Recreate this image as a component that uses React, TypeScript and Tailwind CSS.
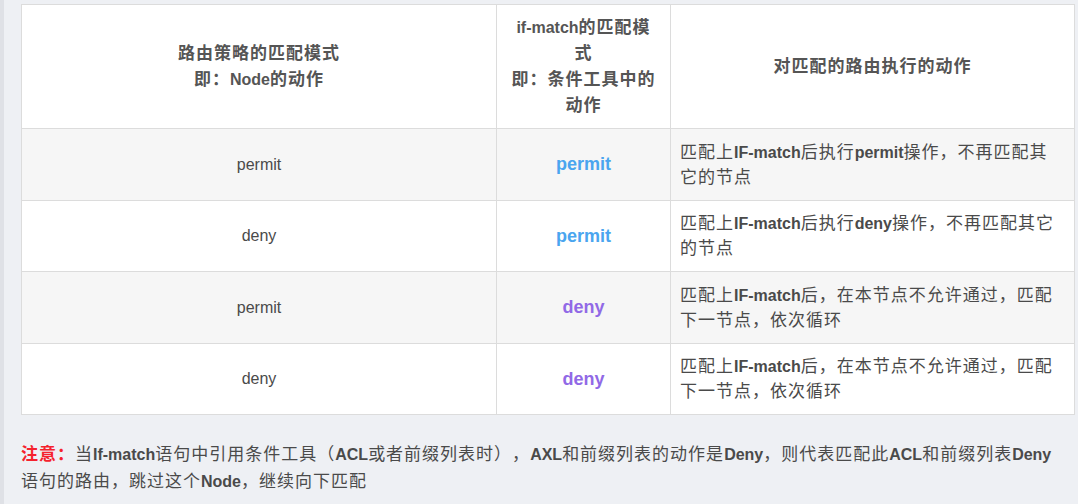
const font = { fontFamily: '"Liberation Sans", "Noto Sans CJK SC", sans-serif' };

function L({ children }: { children: React.ReactNode }) {
  return <span className="font-bold text-[16px] tracking-normal">{children}</span>;
}

const rows = [
  {
    node: 'permit',
    match: 'permit',
    color: 'text-[#4aa5ef]',
    bg: 'bg-[#f6f6f6]',
    h: 'h-[72px]',
    action: (
      <>
        匹配上<L>IF-match</L>后执行<L>permit</L>操作，不再匹配其它的节点
      </>
    ),
  },
  {
    node: 'deny',
    match: 'permit',
    color: 'text-[#4aa5ef]',
    bg: 'bg-white',
    h: 'h-[71px]',
    action: (
      <>
        匹配上<L>IF-match</L>后执行<L>deny</L>操作，不再匹配其它的节点
      </>
    ),
  },
  {
    node: 'permit',
    match: 'deny',
    color: 'text-[#9169e6]',
    bg: 'bg-[#f6f6f6]',
    h: 'h-[72px]',
    action: (
      <>
        匹配上<L>IF-match</L>后，在本节点不允许通过，匹配下一节点，依次循环
      </>
    ),
  },
  {
    node: 'deny',
    match: 'deny',
    color: 'text-[#9169e6]',
    bg: 'bg-white',
    h: 'h-[71px]',
    action: (
      <>
        匹配上<L>IF-match</L>后，在本节点不允许通过，匹配下一节点，依次循环
      </>
    ),
  },
];

export default function App() {
  return (
    <div className="flex w-[1078px] h-[504px] bg-[#eef0f4] overflow-hidden" style={font}>
      <div className="w-[4px] shrink-0 bg-[#dfe1e6]" />
      <div className="pl-[17px] pt-[4px]">
        <table className="table-fixed border-collapse w-[1053px] text-[17px] tracking-[1px] text-[#4a4a4a]">
          <colgroup>
            <col className="w-[475px]" />
            <col className="w-[174px]" />
            <col className="w-[404px]" />
          </colgroup>
          <thead>
            <tr className="h-[124px] bg-white">
              <th className="border border-[#dcdcdc] px-[10px] text-center font-bold leading-[26px] text-[#555]">
                路由策略的匹配模式
                <br />
                即：<L>Node</L>的动作
              </th>
              <th className="border border-[#dcdcdc] px-[11px] text-center font-bold leading-[26px] text-[#555]">
                <L>if-match</L>的匹配模式
                <br />
                即：条件工具中的动作
              </th>
              <th className="border border-[#dcdcdc] px-[10px] text-center font-bold leading-[26px] text-[#555]">
                对匹配的路由执行的动作
              </th>
            </tr>
          </thead>
          <tbody>
            {rows.map((r, i) => (
              <tr key={i} className={`${r.bg} ${r.h}`}>
                <td className="border border-[#dcdcdc] px-[10px] text-center text-[16px] tracking-normal">
                  {r.node}
                </td>
                <td
                  className={`border border-[#dcdcdc] px-[10px] text-center font-bold text-[18px] tracking-normal ${r.color}`}
                >
                  {r.match}
                </td>
                <td className="border border-[#dcdcdc] px-[9px] leading-[25px]">{r.action}</td>
              </tr>
            ))}
          </tbody>
        </table>
        <p className="mt-[26px] w-[1052px] text-[17px] tracking-[1px] leading-[27px] text-[#4a4a4a] [text-spacing-trim:space-all]">
          <span className="font-bold text-[#f5222d]">注意：</span>当<L>If-match</L>语句中引用条件工具（<L>ACL</L>或者前缀列表时），<L>AXL</L>和前缀列表的动作是<L>Deny</L>，则代表匹配此<L>ACL</L>和前缀列表<L>Deny</L>
          <br />
          语句的路由，跳过这个<L>Node</L>，继续向下匹配
        </p>
      </div>
    </div>
  );
}
